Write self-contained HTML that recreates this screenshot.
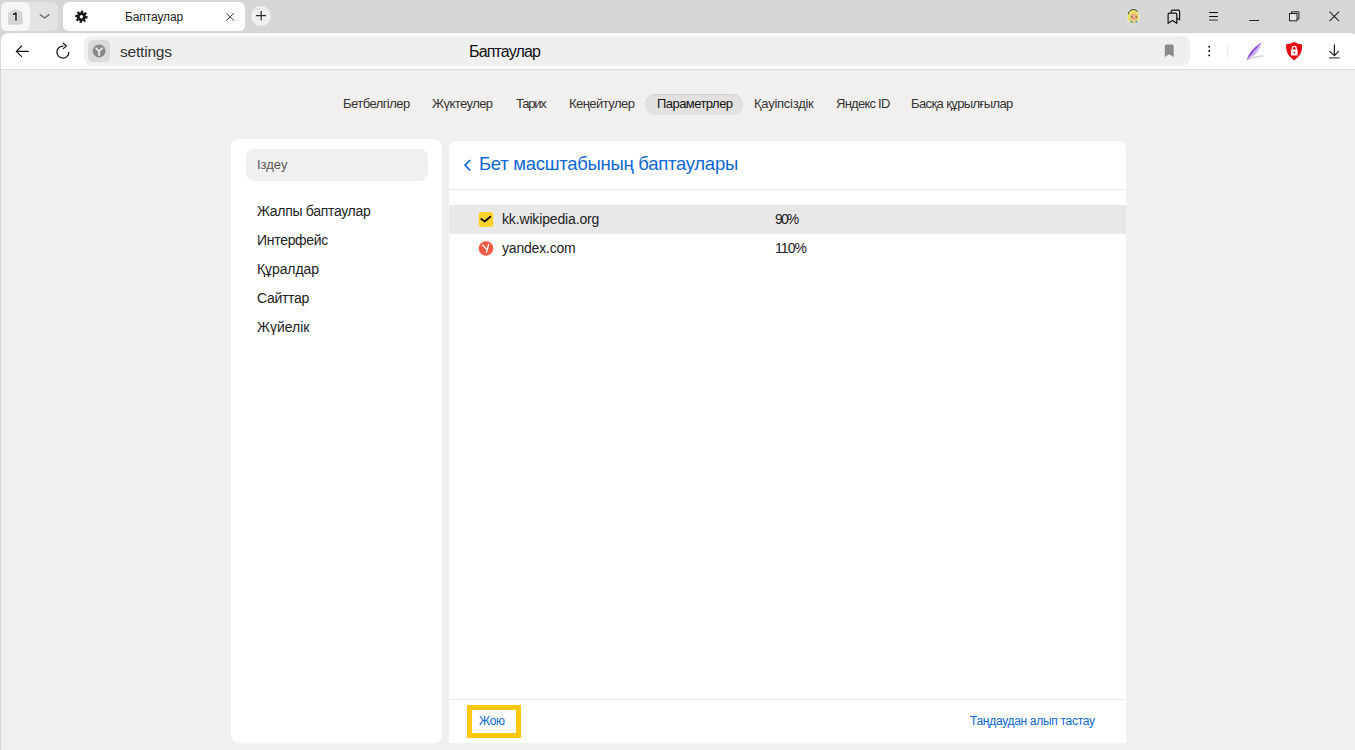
<!DOCTYPE html>
<html><head><meta charset="utf-8">
<style>
*{margin:0;padding:0;box-sizing:border-box}
html,body{width:1355px;height:750px;overflow:hidden}
body{background:#f1f0ee;font-family:"Liberation Sans",sans-serif;position:relative;color:#222}
.a{position:absolute}
.t{position:absolute;white-space:nowrap}
svg{position:absolute;overflow:visible}
</style></head><body>
<!-- tab strip -->
<div class="a" style="left:0;top:0;width:1355px;height:50px;background:#d6d6d6"></div>
<div class="a" style="left:1px;top:2px;width:57px;height:29px;background:#e3e3e3;border-radius:6px"></div>
<div class="a" style="left:1px;top:2px;width:29px;height:29px;background:#f6f6f6;border-radius:6px"></div>
<div class="a" style="left:63px;top:2px;width:182px;height:29px;background:#fff;border-radius:6px"></div>
<div class="a" style="left:251px;top:6px;width:20px;height:20px;background:#efefef;border-radius:50%"></div>

<!-- toolbar -->
<div class="a" style="left:0;top:32px;width:1355px;height:1px;background:#d2d2d2"></div>
<div class="a" style="left:1px;top:33px;width:1357px;height:36px;background:#fff;border-radius:8px 8px 0 0"></div>
<div class="a" style="left:0;top:69px;width:1355px;height:1px;background:#dddcda"></div>
<div class="a" style="left:84px;top:36px;width:1106px;height:30px;background:#efefef;border-radius:8px"></div>
<div class="a" style="left:88px;top:40px;width:22px;height:22px;background:#dadada;border-radius:5px"></div>

<div class="a" style="left:0;top:32px;width:1px;height:718px;background:#d6d6d6"></div>
<!-- nav pill -->
<div class="a" style="left:645px;top:94px;width:98px;height:21px;background:#e2e1df;border-radius:11px;box-shadow:inset 0 1px 1px rgba(0,0,0,0.07)"></div>

<!-- sidebar -->
<div class="a" style="left:231px;top:139px;width:211px;height:604px;background:#fff;border-radius:8px"></div>
<div class="a" style="left:246px;top:149px;width:182px;height:32px;background:#f0f0f0;border-radius:8px"></div>

<!-- main card -->
<div class="a" style="left:449px;top:141px;width:677px;height:602px;background:#fff;border-radius:7px 7px 0 0"></div>
<div class="a" style="left:449px;top:189px;width:677px;height:1px;background:#e9e9e9"></div>
<div class="a" style="left:449px;top:205px;width:677px;height:29px;background:#e8e8e8"></div>
<div class="a" style="left:449px;top:699px;width:677px;height:1px;background:#e9e9e9"></div>
<div class="a" style="left:467px;top:705px;width:54px;height:33px;border:5px solid #ffc80a"></div>

<!-- ICONS -->
<svg width="1355" height="750" style="left:0;top:0" viewBox="0 0 1355 750">
 <!-- badge -->
 <path d="M15.35,9.1 Q15.85,9.1 16.4,9.5 L21.8,12 Q22.7,12.5 22.7,13.5 L22.7,22.2 Q22.7,24.7 20.2,24.7 L10.5,24.7 Q8,24.7 8,22.2 L8,13.5 Q8,12.5 8.9,12 L14.3,9.5 Q14.85,9.1 15.35,9.1 Z" fill="#d5d5d5"/>
 <path d="M13.4,14.4 L16,13 L16,20.3" fill="none" stroke="#fafafa" stroke-opacity="0.8" stroke-width="2.8" stroke-linecap="round" stroke-linejoin="round"/>
 <path d="M13.4,14.4 L16,13 L16,20.3" fill="none" stroke="#111" stroke-width="1.45" stroke-linecap="round" stroke-linejoin="round"/>
 <!-- chevron -->
 <path d="M40.4,14.8 L44.7,18 L49,14.7" fill="none" stroke="#707070" stroke-width="1.5" stroke-linecap="round" stroke-linejoin="round"/>
 <!-- gear -->
 <path fill-rule="evenodd" fill="#1a1a1a" d="M85.86,16.07 L87.69,16.37 L87.42,18.54 L85.57,18.39 L84.99,19.41 L86.08,20.92 L84.36,22.26 L83.16,20.84 L82.03,21.16 L81.73,22.99 L79.56,22.72 L79.71,20.87 L78.69,20.29 L77.18,21.38 L75.84,19.66 L77.26,18.46 L76.94,17.33 L75.11,17.03 L75.38,14.86 L77.23,15.01 L77.81,13.99 L76.72,12.48 L78.44,11.14 L79.64,12.56 L80.77,12.24 L81.07,10.41 L83.24,10.68 L83.09,12.53 L84.11,13.11 L85.62,12.02 L86.96,13.74 L85.54,14.94Z M83.10,16.70 A1.7,1.7 0 1 0 79.70,16.70 A1.7,1.7 0 1 0 83.10,16.70Z"/>
 <!-- tab close -->
 <path d="M226.3,13.1 L234,20.6 M234,13.1 L226.3,20.6" stroke="#3a3a3a" stroke-width="1"/>
 <!-- plus -->
 <path d="M256,15.6 L266,15.6 M261.2,11 L261.2,20.5" stroke="#2a2a2a" stroke-width="1.2"/>
 <!-- avatar -->
 <ellipse cx="1133.3" cy="16.6" rx="6.4" ry="7.7" fill="none" stroke="#ececf0" stroke-width="0.8"/>
 <ellipse cx="1133.3" cy="16.6" rx="5.8" ry="7.2" fill="#e4de62"/>
 <path d="M1128.1,14.2 Q1129,9.8 1133.3,9.5 Q1136.4,9.4 1137.6,11.6" fill="none" stroke="#2a2a2a" stroke-width="0.9"/>
 <path d="M1130.6,14.2 Q1134,12.6 1137.4,14.4 L1137.2,19.4 Q1134,21.3 1130.8,19.4 Z" fill="#e9b58e"/>
 <circle cx="1131.8" cy="17" r="0.65" fill="#222"/>
 <circle cx="1136.2" cy="17" r="0.65" fill="#222"/>
 <circle cx="1134" cy="18.5" r="0.55" fill="#e0407a"/>
 <path d="M1130.8,20.7 L1133.4,21.9 L1130.8,23 Z M1137.2,20.7 L1134.6,21.9 L1137.2,23 Z" fill="#2e8be8"/>
 <circle cx="1134" cy="22.6" r="0.9" fill="#f0b8c0"/>
 <!-- bookmarks -->
 <path d="M1171.2,13 L1171.2,11.6 Q1171.2,10.2 1172.6,10.2 L1178.2,10.2 Q1179.6,10.2 1179.6,11.6 L1179.6,19.8 L1176.8,18.2" fill="none" stroke="#111" stroke-width="1.2" stroke-linejoin="round"/>
 <path d="M1168.1,23.3 L1168.1,14.6 Q1168.1,13.2 1169.5,13.2 L1175.4,13.2 Q1176.8,13.2 1176.8,14.6 L1176.8,23.3 L1172.45,20.6 Z" fill="none" stroke="#111" stroke-width="1.2" stroke-linejoin="round"/>
 <!-- hamburger -->
 <path d="M1209.1,12.5 L1217.9,12.5 M1209.1,16.5 L1217.9,16.5" stroke="#111" stroke-width="1.1"/>
 <path d="M1209.1,20.1 L1217.9,20.1" stroke="#6a6a6a" stroke-width="1.5"/>
 <!-- minimize -->
 <path d="M1249.2,20.5 L1259,20.5" stroke="#222" stroke-width="1"/>
 <!-- restore -->
 <rect x="1289.5" y="13.5" width="7.5" height="7.3" fill="#e4e4e4" stroke="#222" stroke-width="1"/>
 <path d="M1291.5,13.5 L1291.5,11.8 L1298.9,11.8 L1298.9,19 L1297,19" fill="none" stroke="#222" stroke-width="1"/>
 <!-- win close -->
 <path d="M1329.5,11.6 L1339,21.2 M1339,11.6 L1329.5,21.2" stroke="#222" stroke-width="1.05"/>

 <!-- back -->
 <path d="M28.3,51.4 L16.3,51.4 M21.7,46 L16.3,51.4 L21.7,56.6" fill="none" stroke="#111" stroke-width="1.1" stroke-linecap="round" stroke-linejoin="round"/>
 <!-- reload -->
 <path d="M63.4,46.1 A6,6 0 1 0 68.9,52.1" fill="none" stroke="#111" stroke-width="1.25"/>
 <path d="M63.2,43.2 L66.3,46 L63.3,48.6" fill="none" stroke="#111" stroke-width="1.2" stroke-linecap="round" stroke-linejoin="round"/>
 <!-- omnibox y icon -->
 <circle cx="99.1" cy="50.9" r="6.5" fill="#8a8a8a"/>
 <path d="M95.6,47.8 L99.1,51.2 L102.6,47.8 M99.1,51.2 L99.1,55.7" fill="none" stroke="#fff" stroke-width="1.5"/>
 <!-- bookmark -->
 <path d="M1164.8,57.1 L1164.8,46 Q1164.8,44.5 1166.3,44.5 L1172.2,44.5 Q1173.7,44.5 1173.7,46 L1173.7,57.1 L1169.25,54.2 Z" fill="#8a8a8a"/>
 <!-- kebab -->
 <circle cx="1209.2" cy="46.7" r="0.95" fill="#111"/>
 <circle cx="1209.2" cy="51" r="0.95" fill="#111"/>
 <circle cx="1209.2" cy="55.4" r="0.95" fill="#111"/>
 <path d="M1227.8,44.2 L1227.8,57.6" stroke="#e6e6e6" stroke-width="1"/>
 <!-- feather -->
 <path d="M1262.8,56 Q1255,56.3 1248,59.7" fill="none" stroke="#d4d4d8" stroke-width="1.3" stroke-linecap="round"/>
 <path d="M1247.6,59.2 Q1259.5,53.5 1261,43.4 Q1253,51.5 1247.6,59.2 Z" fill="#cdb6f2"/>
 <path d="M1247.2,59.6 Q1249.5,50.5 1261,43.1 Q1253,51.8 1247.2,59.6 Z" fill="#8c45d6" stroke="#8c45d6" stroke-width="0.5"/>
 <!-- shield -->
 <path d="M1294.1,42.1 Q1298.4,44.2 1302.2,44.6 Q1302.6,55.6 1294.1,60.2 Q1285.6,55.6 1286,44.6 Q1289.8,44.2 1294.1,42.1 Z" fill="#e8000c"/>
 <path d="M1292.2,49.8 L1292.2,48.2 Q1292.2,46.3 1294.2,46.3 Q1296.2,46.3 1296.2,48.2 L1296.2,49.8" fill="none" stroke="#fff" stroke-width="1.3"/>
 <rect x="1290.9" y="49.6" width="6.7" height="6" rx="0.6" fill="#fff"/>
 <circle cx="1294.25" cy="52.6" r="0.8" fill="#e8000c"/>
 <!-- download -->
 <path d="M1334.4,44.4 L1334.4,55.2 M1329.4,51.1 L1334.4,55.6 L1338.8,51.1" fill="none" stroke="#1a1a1a" stroke-width="1.2" stroke-linejoin="round"/>
 <path d="M1329,57.9 L1339.7,57.9" stroke="#555" stroke-width="1.3"/>

 <!-- title chevron -->
 <path d="M469.8,160.5 L465,165.2 L469.8,170" fill="none" stroke="#0d68d3" stroke-width="1.7" stroke-linecap="round" stroke-linejoin="round"/>
 <!-- checkbox -->
 <rect x="478.7" y="211.9" width="14.6" height="15" rx="3" fill="#ffd42a"/>
 <path d="M481.3,218.9 L484.7,221.5 L490.3,216.7" fill="none" stroke="#111" stroke-width="1.9" stroke-linecap="round" stroke-linejoin="round"/>
 <!-- yandex -->
 <circle cx="486" cy="248.45" r="7.25" fill="#f25a43"/>
 <path d="M482.7,244.9 L486.1,248.9 M488.7,244.4 L486.4,252.2" fill="none" stroke="#fff" stroke-width="1.35" stroke-linecap="round"/>
</svg>

<!-- TEXT -->
<div class="t" style="left:125px;top:11px;font-size:12px;line-height:12px;color:#222;letter-spacing:-0.1px">Баптаулар</div>
<div class="t" style="left:120px;top:43.5px;font-size:15.5px;line-height:15.5px;color:#333;letter-spacing:-0.2px">settings</div>
<div class="t" style="left:469px;top:44px;font-size:16px;line-height:16px;color:#111;letter-spacing:-0.85px">Баптаулар</div>

<div class="t" style="left:343px;top:97px;font-size:13px;line-height:13px;color:#333;letter-spacing:-0.55px">Бетбелгілер</div>
<div class="t" style="left:432px;top:97px;font-size:13px;line-height:13px;color:#333;letter-spacing:-0.55px">Жүктеулер</div>
<div class="t" style="left:516px;top:97px;font-size:13px;line-height:13px;color:#333;letter-spacing:-1.2px">Тарих</div>
<div class="t" style="left:569px;top:97px;font-size:13px;line-height:13px;color:#333;letter-spacing:-0.55px">Кеңейтулер</div>
<div class="t" style="left:657px;top:97px;font-size:13px;line-height:13px;color:#111;letter-spacing:-0.55px">Параметрлер</div>
<div class="t" style="left:754px;top:97px;font-size:13px;line-height:13px;color:#333;letter-spacing:-0.25px">Қауіпсіздік</div>
<div class="t" style="left:836px;top:97px;font-size:13px;line-height:13px;color:#333;letter-spacing:-0.75px">Яндекс ID</div>
<div class="t" style="left:911px;top:97px;font-size:13px;line-height:13px;color:#333;letter-spacing:-0.6px">Басқа құрылғылар</div>

<div class="t" style="left:257px;top:158px;font-size:13px;line-height:13px;color:#585858">Іздеу</div>
<div class="t" style="left:257px;top:204px;font-size:14px;line-height:14px;color:#222;letter-spacing:-0.3px">Жалпы баптаулар</div>
<div class="t" style="left:257px;top:233px;font-size:14px;line-height:14px;color:#222;letter-spacing:-0.3px">Интерфейс</div>
<div class="t" style="left:257px;top:262px;font-size:14px;line-height:14px;color:#222;letter-spacing:-0.1px">Құралдар</div>
<div class="t" style="left:257px;top:291px;font-size:14px;line-height:14px;color:#222;letter-spacing:-0.3px">Сайттар</div>
<div class="t" style="left:257px;top:320px;font-size:14px;line-height:14px;color:#222">Жүйелік</div>

<div class="t" style="left:479px;top:155px;font-size:18.5px;line-height:18.5px;color:#0d68d3;letter-spacing:-0.28px">Бет масштабының баптаулары</div>
<div class="t" style="left:502px;top:212px;font-size:14px;line-height:14px;color:#222;letter-spacing:-0.15px">kk.wikipedia.org</div>
<div class="t" style="left:775px;top:212px;font-size:14px;line-height:14px;color:#222;letter-spacing:-1.9px">90%</div>
<div class="t" style="left:502px;top:241px;font-size:14px;line-height:14px;color:#222;letter-spacing:-0.2px">yandex.com</div>
<div class="t" style="left:775px;top:241px;font-size:14px;line-height:14px;color:#222;letter-spacing:-0.9px">110%</div>

<div class="t" style="left:479px;top:715px;font-size:12px;line-height:12px;color:#0d68d3;letter-spacing:-0.3px">Жою</div>
<div class="t" style="left:970px;top:715px;font-size:12px;line-height:12px;color:#0d68d3;letter-spacing:-0.3px">Таңдаудан алып тастау</div>

</body></html>
